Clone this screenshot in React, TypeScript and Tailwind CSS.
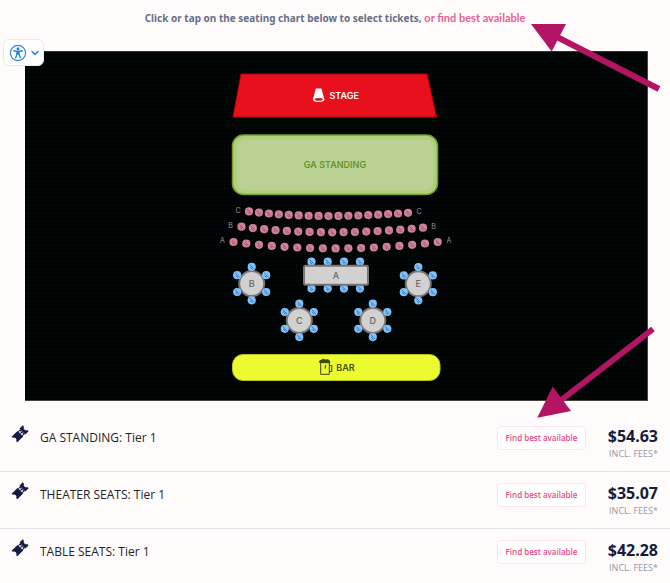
import { ChevronDown } from "lucide-react";

type Point = { x: number; y: number };

const seatRows = [
  { name: "C", x0: 249, x1: 408, yl: 211.4, yr: 212.8, mid: 216, lx: 238, rx: 419, ly: 212.5, ry: 214 },
  { name: "B", x0: 241.5, x1: 423, yl: 226.7, yr: 227.7, mid: 232.3, lx: 230.5, rx: 433.5, ly: 228, ry: 228.5 },
  { name: "A", x0: 233.5, x1: 437.7, yl: 242, yr: 242, mid: 248.4, lx: 222.5, rx: 449, ly: 243, ry: 243 },
];

const roundTables = [
  { name: "B", x: 251.7, y: 283.6 },
  { name: "E", x: 418.3, y: 283.8 },
  { name: "C", x: 299.3, y: 320.4 },
  { name: "D", x: 372.8, y: 320.4 },
];

const tableSeats: Point[] = [
  { x: 0, y: -16.7 },
  { x: 14.5, y: -8.4 },
  { x: 14.5, y: 8.4 },
  { x: 0, y: 16.7 },
  { x: -14.5, y: 8.4 },
  { x: -14.5, y: -8.4 },
];

const tiers = [
  { name: "GA STANDING: Tier 1", price: "$54.63" },
  { name: "THEATER SEATS: Tier 1", price: "$35.07" },
  { name: "TABLE SEATS: Tier 1", price: "$42.28" },
];

function Seat({ x, y, fill, mark }: Point & { fill: string; mark: string }) {
  return (
    <g transform={`translate(${x} ${y})`}>
      <circle r="4.1" fill={fill} />
      <path d="M-2 -2.2 L2.2 2 M-1.6 0.4 L0.6 2.4" stroke={mark} strokeWidth="0.9" fill="none" />
    </g>
  );
}

function SeatRow({ row }: { row: (typeof seatRows)[number] }) {
  const seats = Array.from({ length: 17 }, (_, i) => {
    const t = i / 16;
    const u = 2 * t - 1;
    const end = row.yl + (row.yr - row.yl) * t;
    return { x: row.x0 + (row.x1 - row.x0) * t, y: row.mid - (row.mid - end) * u * u };
  });
  return (
    <g>
      <text x={row.lx} y={row.ly} textAnchor="middle" fontSize="7" fill="#9a9a9a">{row.name}</text>
      {seats.map((s, i) => (
        <Seat key={i} x={s.x} y={s.y} fill="#d08299" mark="#a04c68" />
      ))}
      <text x={row.rx} y={row.ry} textAnchor="middle" fontSize="7" fill="#9a9a9a">{row.name}</text>
    </g>
  );
}

function SeatingChart() {
  return (
    <svg
      viewBox="25 51 623 350"
      className="block w-full bg-black font-[Inter,sans-serif]"
      role="img"
      aria-label="Seating chart"
    >
      <defs>
        <pattern id="mesh" width="4" height="4" patternUnits="userSpaceOnUse">
          <rect width="4" height="4" fill="#010202" />
          <path d="M0 0.5H4M0.5 0V4" stroke="#040708" strokeWidth="1" />
        </pattern>
      </defs>
      <rect x="25" y="51" width="623" height="350" fill="url(#mesh)" />
      <path d="M25 400.5H647.5V51M25 51.2H648" stroke="#555" strokeWidth="0.8" fill="none" />

      <path d="M241 74H427L436.5 117H233Z" fill="#e7101c" stroke="#b50009" strokeWidth="1" />
      <path d="M315.8 88.4H321.4L324.4 99.2Q324.6 101.7 318.8 101.9Q312.8 101.7 313 99.2Z" fill="#fff" />
      <ellipse cx="318.7" cy="99.4" rx="4" ry="1.3" fill="#c91b25" />
      <text x="329.5" y="98.6" fontSize="9" fontWeight="600" fill="#fff">STAGE</text>

      <rect x="232.5" y="135" width="205" height="59.5" rx="11" fill="#b0cf7d" stroke="#759d2b" strokeWidth="1.5" />
      <rect x="237" y="139.5" width="196" height="50.5" rx="7" fill="#b9d294" />
      <text x="335" y="167.6" textAnchor="middle" fontSize="9" fontWeight="600" fill="#6c9327">GA STANDING</text>

      {seatRows.map((row) => (
        <SeatRow key={row.name} row={row} />
      ))}

      {[311.5, 327.7, 344, 360].map((x) => (
        <g key={x}>
          <Seat x={x} y={261.7} fill="#82c0f8" mark="#286fb9" />
          <Seat x={x} y={288.6} fill="#82c0f8" mark="#286fb9" />
        </g>
      ))}
      <rect x="304" y="265.7" width="64" height="19" rx="1.5" fill="#d1d1d1" stroke="#777" strokeWidth="2" />
      <text x="336" y="278.5" textAnchor="middle" fontSize="9" fontWeight="500" fill="#666">A</text>

      {roundTables.map((t) => (
        <g key={t.name}>
          <circle cx={t.x} cy={t.y} r="12.5" fill="#d1d1d1" stroke="#777" strokeWidth="2" />
          {tableSeats.map((s, i) => (
            <Seat key={i} x={t.x + s.x} y={t.y + s.y} fill="#82c0f8" mark="#286fb9" />
          ))}
          <text x={t.x} y={t.y + 3.2} textAnchor="middle" fontSize="9" fontWeight="500" fill="#666">{t.name}</text>
        </g>
      ))}

      <rect x="232.5" y="354.5" width="207.5" height="26" rx="10.5" fill="#ecfb2f" stroke="#b9c51e" strokeWidth="1" />
      <g fill="none" stroke="#3d4300" strokeWidth="1">
        <path d="M320.7 363V374.3H329.3V363M329.3 365.5H331.8V371.5H329.3M326.2 365.5H325.3V368.5" />
        <path d="M319.8 362.6Q318.8 360.5 321.3 360.2Q323.5 358.6 325.5 360Q329 359 329.8 361.2V362.8Z" fill="#3d4300" />
      </g>
      <text x="336.3" y="370.6" fontSize="9" fontWeight="600" fill="#474d08">BAR</text>
    </svg>
  );
}

function TicketIcon() {
  return (
    <svg viewBox="-8 -8 16 16" className="size-4 shrink-0 self-start overflow-visible" aria-hidden="true">
      <g transform="rotate(-45)">
        <path
          fill="#141b40"
          d="M-7.8 -4H0.4V4H-7.8V2.4A2.5 2.5 0 0 0 -7.8 -2.4Z"
        />
        <path fill="#141b40" d="M3.4 -4.2H8V-2.4A2.5 2.5 0 0 0 8 2.4V4.2H3.4Z" />
        <path d="M1.9 -3.2V3.4" stroke="#141b40" strokeWidth="3.2" strokeDasharray="1.7 0.8" />
        <path d="M1.3 -3.4V3.4" stroke="#fffbfa" strokeWidth="0.9" strokeDasharray="2 0.4" />
      </g>
    </svg>
  );
}

function AccessibilityIcon() {
  return (
    <svg viewBox="0 0 18 18" className="size-[18px] shrink-0" aria-hidden="true">
      <circle cx="9" cy="9" r="7.6" fill="none" stroke="#2b80e0" strokeWidth="1.2" />
      <circle cx="9" cy="4.8" r="1.5" fill="#2b80e0" />
      <path
        d="M4.7 6.7 8 7.5V10L6.7 13.8M13.3 6.7 10 7.5V10L11.3 13.8M8 7.5H10M8 10H10M9 7V10"
        fill="none"
        stroke="#2b80e0"
        strokeWidth="1.4"
        strokeLinecap="round"
      />
    </svg>
  );
}

function PointerArrows() {
  return (
    <svg
      viewBox="530 0 140 420"
      className="pointer-events-none absolute top-0 right-0 w-[140px]"
      aria-hidden="true"
    >
      <g fill="#b31564" stroke="#b31564">
        <path d="M531 24H566L551.7 51.5Z" stroke="none" />
        <path d="M553 35 659 89" strokeWidth="6" />
        <path d="M537.3 417.7 552.7 386.5 571 411Z" stroke="none" />
        <path d="M560 401 653 329" strokeWidth="6" />
      </g>
    </svg>
  );
}

export default function App() {
  return (
    <main className="relative min-h-screen bg-[#fffbfa] font-['Open_Sans',sans-serif]">
      <p className="py-2 text-center font-['Noto_Sans',sans-serif] text-[10px] leading-5 font-bold text-[#657087]">
        Click or tap on the seating chart below to select tickets,{" "}
        <a href="#tiers" className="font-[Lato,sans-serif] text-[11px] font-bold text-[#ea5f97]">
          or find best available
        </a>
      </p>

      <button
        type="button"
        aria-label="Accessibility options"
        className="absolute top-[39px] left-[3px] flex h-[27px] w-[41px] items-center gap-0.5 rounded-md border border-[#e9e9eb] bg-white pl-[5px]"
      >
        <AccessibilityIcon />
        <ChevronDown size={12} strokeWidth={3} color="#2b80e0" />
      </button>

      <section className="mt-[15px] mr-[22px] ml-[25px]">
        <SeatingChart />
      </section>

      <ul id="tiers" className="mt-[14px] divide-y divide-[#e2e4eb]">
        {tiers.map((tier) => (
          <li key={tier.name} className="flex h-[57px] items-start pt-[11px] pr-3 pl-3">
            <TicketIcon />
            <h2 className="ml-3 flex-1 text-[12px] leading-6 text-[#22242a]">{tier.name}</h2>
            <button
              type="button"
              className="h-6 w-[89px] rounded border border-[#fde4ee] bg-white text-[8px] font-semibold text-[#e64989]"
            >
              Find best available
            </button>
            <div className="w-[72px] text-right">
              <div className="font-['Noto_Sans',sans-serif] text-[16px] leading-5 font-bold text-[#141b40]">
                {tier.price}
              </div>
              <div className="text-[9px] leading-4 text-[#9297a5]">INCL. FEES*</div>
            </div>
          </li>
        ))}
      </ul>
      <PointerArrows />
    </main>
  );
}
